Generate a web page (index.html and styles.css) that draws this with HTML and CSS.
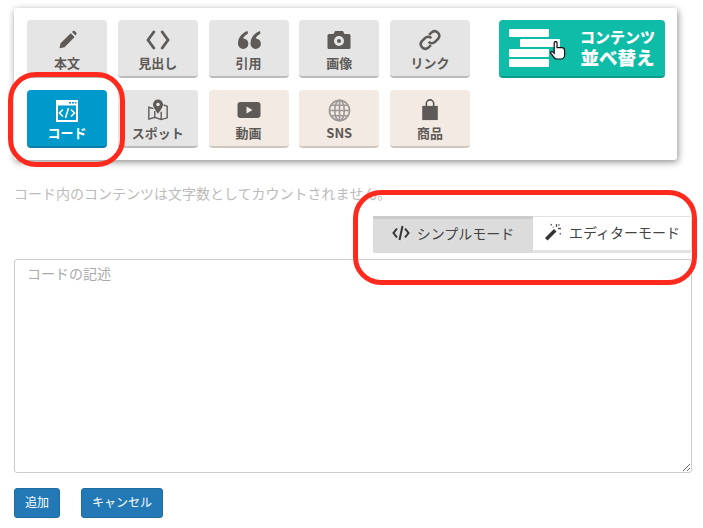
FILE: index.html
```html
<!DOCTYPE html>
<html lang="ja">
<head>
    <meta charset="UTF-8">
    <title>コードの追加</title>
    <link rel="stylesheet" href="styles.css">
</head>
<body>
    <div class="block-panel">
        <div class="block-grid">
            <div class="block-btn">
                <svg class="block-icon" viewBox="0 0 24 24"><path d="M3 22l1.3-6L16.5 3.800l4.700 4.700L9 20.700z M18 2.300l1.300-1a1.500 1.500 0 0 1 2 0l1.900 1.900a1.500 1.500 0 0 1 0 2l-1 1.300z"/></svg>
                <span>本文</span>
            </div>
            <div class="block-btn">
                <svg class="block-icon icon-wide" viewBox="0 0 24 20"><path d="M8.500 1L2 10l6.500 9M15.500 1L22 10l-6.500 9" fill="none" stroke-width="2.800"/></svg>
                <span>見出し</span>
            </div>
            <div class="block-btn">
                <svg class="block-icon icon-wide" viewBox="0 0 24 20"><path d="M10.500 1C5 3 1 7.500 1 13.500a5.200 5.200 0 1 0 5.200-5C7 6.500 8.500 5 11 3.500z M23 1c-5.500 2-9.500 6.500-9.500 12.500a5.200 5.200 0 1 0 5.200-5c.8-2 2.300-3.500 4.800-5z"/></svg>
                <span>引用</span>
            </div>
            <div class="block-btn">
                <svg class="block-icon icon-wide" viewBox="0 0 24 20"><path fill-rule="evenodd" d="M8 1h8l1.500 3H22a1.500 1.500 0 0 1 1.500 1.500v12A1.500 1.500 0 0 1 22 19H2a1.500 1.500 0 0 1-1.500-1.500v-12A1.500 1.500 0 0 1 2 4h4.500zM12 6a5 5 0 1 0 0 10 5 5 0 0 0 0-10zM12 9a2 2 0 1 1 0 4 2 2 0 0 1 0-4z"/></svg>
                <span>画像</span>
            </div>
            <div class="block-btn">
                <svg class="block-icon icon-link" viewBox="0 0 24 24"><path d="M11 6.500l3-3a5 5 0 0 1 7 7L17.500 14a5 5 0 0 1-7 0M13 17.500l-3 3a5 5 0 0 1-7-7L6.500 10a5 5 0 0 1 7 0" fill="none" stroke-width="2.800"/></svg>
                <span>リンク</span>
            </div>
            <div class="sort-btn">
                <div class="sort-bars">
                    <i></i>
                    <i class="sort-bar-moved"></i>
                    <i></i>
                    <i></i>
                    <svg class="sort-hand" viewBox="0 0 18 20"><path d="M5.500 2a1.500 1.500 0 0 1 3 0v5h5a3 3 0 0 1 3 3v5a4 4 0 0 1-4 4H8a3 3 0 0 1-2.500-1.500L2 13c-.8-1.300 1-2.500 2-1.500l1.500 1.500z" fill="#fff" stroke="#111" stroke-width="1.300"/></svg>
                </div>
                <div class="sort-label">
                    <span class="sort-line">コンテンツ</span>
                    <span class="sort-line sort-line-big">並べ替え</span>
                </div>
            </div>
            <div class="block-btn is-active">
                <svg class="block-icon code-window" viewBox="0 0 24 24">
                    <path fill="#fff" fill-rule="evenodd" d="M1 1h22v22H1zM3 6.500V21h18V6.500z"/>
                    <path fill="#0099cb" d="M14 3h2v1.500h-2zM17 3h2v1.500h-2zM20 3h1.500v1.500H20z"/>
                    <path d="M8 10.500L4.500 14 8 17.500M16 10.500l3.500 3.500-3.500 3.500M13.500 9l-3 10" fill="none" stroke-width="1.600"/>
                </svg>
                <span>コード</span>
            </div>
            <div class="block-btn">
                <svg class="block-icon icon-map" viewBox="0 0 24 24"><path d="M7 10.500L2 9v13l6.500-2 7 2.500L22 20.500V8l-4-1.500M8.500 13v7M15.500 14v8" fill="none" stroke-width="1.500"/><path fill-rule="evenodd" d="M12 .5a5.500 5.500 0 0 1 5.500 5.500c0 3.500-5.500 10-5.500 10S6.500 9.500 6.500 6A5.500 5.500 0 0 1 12 .5zM12 4a2 2 0 1 0 0 4 2 2 0 0 0 0-4z"/></svg>
                <span>スポット</span>
            </div>
            <div class="block-btn is-media">
                <svg class="block-icon icon-wide" viewBox="0 0 24 20"><path fill-rule="evenodd" d="M3.500 2h17a3 3 0 0 1 3 3v10a3 3 0 0 1-3 3h-17a3 3 0 0 1-3-3V5a3 3 0 0 1 3-3zM9.500 6.500v7l6-3.500z"/></svg>
                <span>動画</span>
            </div>
            <div class="block-btn is-media">
                <svg class="block-icon icon-globe" viewBox="0 0 24 24"><g fill="none" stroke-width="1.700"><circle cx="12" cy="12" r="10.500"/><ellipse cx="12" cy="12" rx="5" ry="10.500"/><path d="M12 1.500v21M1.500 12h21M3 6.500h18M3 17.500h18"/></g></svg>
                <span>SNS</span>
            </div>
            <div class="block-btn is-media">
                <svg class="block-icon icon-bag" viewBox="0 0 24 24"><path fill-rule="evenodd" d="M3.500 7.500h17V23h-17z"/><path d="M8 10V5a4 4 0 0 1 8 0v5" fill="none" stroke-width="1.800"/></svg>
                <span>商品</span>
            </div>
        </div>
    </div>

    <p class="note">コード内のコンテンツは文字数としてカウントされません。</p>

    <div class="mode-row">
        <div class="mode-tabs">
            <div class="mode-tab is-current">
                <svg class="mode-icon" viewBox="0 0 18 18"><path d="M5 4.500L1.500 9 5 13.500M13 4.500L16.500 9 13 13.500M10.500 2l-3 14" fill="none" stroke="#333" stroke-width="2"/></svg>
                <span>シンプルモード</span>
            </div>
            <div class="mode-tab">
                <svg class="mode-icon" viewBox="0 0 18 18"><path d="M1 15L10 6l2.500 2.500-9 9z" fill="#333"/><path d="M7 1l.5 1.500M12.500 1v3M17 5.500h-3M15.500 1.500l-1 1M16 10l.5 1.500M9 4l.5.5" fill="none" stroke="#555" stroke-width="1.300"/></svg>
                <span>エディターモード</span>
            </div>
        </div>
    </div>

    <textarea class="code-input" placeholder="コードの記述"></textarea>

    <div class="form-actions">
        <button class="action-btn" type="button">追加</button>
        <button class="action-btn" type="button">キャンセル</button>
    </div>

    <div class="ring ring-code"></div>
    <div class="ring ring-mode"></div>
</body>
</html>
```

FILE: styles.css
```css
body {
    margin: 0;
    padding: 8px 11px 0 14px;
    font-family: "Noto Sans CJK JP", "Noto Sans", sans-serif;
    background: white;
    position: relative;
    height: 520px;
    box-sizing: border-box;
    overflow: hidden;
}
.block-panel {
    width: 663px;
    height: 152px;
    box-sizing: border-box;
    padding: 12px 13px;
    background: white;
    border-radius: 3px;
    box-shadow: 1px 2px 7px rgba(0, 0, 0, 0.45);
}
.block-grid {
    display: grid;
    grid-template-columns: repeat(5, 80px) 166px;
    grid-auto-rows: 58px;
    column-gap: 10.75px;
    row-gap: 12px;
    justify-content: start;
}
.block-btn {
    display: flex;
    flex-direction: column;
    align-items: center;
    box-sizing: border-box;
    height: 58px;
    padding-top: 10px;
    background: #e5e5e5;
    border-bottom: 2px solid #bdbbb9;
    border-radius: 4px;
    color: #5d5a58;
    font-size: 13px;
    font-weight: 700;
    line-height: 18px;
}
.block-icon {
    width: 20px;
    height: 20px;
    margin-bottom: 4px;
    fill: #5d5a58;
}
.block-icon path[fill="none"] {
    stroke: #5d5a58;
}
.block-icon.icon-wide {
    width: 24px;
}
.block-icon.icon-link,
.block-icon.icon-map,
.block-icon.icon-bag {
    width: 22px;
    height: 22px;
    margin: -1px 0 3px;
}
.block-btn.is-active {
    background: #0099cb;
    border-bottom-color: #0a7ea6;
    color: white;
}
.block-icon.code-window {
    width: 24px;
    height: 24px;
    margin: -1px 0 1px;
}
.block-icon.code-window path[fill="none"] {
    stroke: white;
}
.block-btn.is-media {
    background: #f3ebe3;
    border-bottom-color: #cfc6bc;
}
.block-icon.icon-globe {
    width: 23px;
    height: 23px;
    margin: -1px 0 2px;
    stroke: #9b9896;
}
.sort-btn {
    grid-column: 6;
    grid-row: 1;
    margin-left: 18.25px;
    width: 166px;
    display: flex;
    align-items: center;
    box-sizing: border-box;
    padding: 0 10px;
    background: #0fbca8;
    border-bottom: 2px solid #0c9a8a;
    border-radius: 4px;
}
.sort-bars {
    position: relative;
    display: flex;
    flex-direction: column;
    gap: 2px;
    width: 54px;
    flex-shrink: 0;
}
.sort-bars i {
    display: block;
    width: 40px;
    height: 8px;
    background: white;
    border-radius: 1px;
}
.sort-bars i.sort-bar-moved {
    margin-left: 11px;
}
.sort-hand {
    position: absolute;
    left: 40px;
    top: 12px;
    width: 17px;
    height: 19px;
}
.sort-label {
    margin-left: 17px;
    color: white;
    font-weight: 900;
    text-align: center;
    white-space: nowrap;
}
.sort-line {
    display: block;
    font-size: 15px;
    line-height: 18px;
}
.sort-line-big {
    font-size: 18.500px;
    line-height: 22px;
}
.note {
    margin: 23px 0 0;
    color: #bbb;
    font-size: 14px;
    line-height: 20px;
}
.mode-row {
    display: flex;
    justify-content: flex-end;
    margin-top: 13px;
}
.mode-tabs {
    display: flex;
    width: 319px;
    height: 37px;
    box-sizing: border-box;
    background: white;
    border: 1px solid #e2e2e2;
    border-bottom-width: 3px;
    border-radius: 2px;
}
.mode-tab {
    display: flex;
    align-items: center;
    justify-content: center;
    gap: 7px;
    flex: 1;
    box-sizing: border-box;
    padding-bottom: 3px;
    color: #444;
    font-size: 14px;
    white-space: nowrap;
}
.mode-tab.is-current {
    flex: 0 0 160px;
    margin: -1px 0 -3px -1px;
    padding-bottom: 7px;
    background: #dcdcdc;
    border-top: 3px solid #cbcbcb;
}
.mode-icon {
    width: 18px;
    height: 18px;
}
.code-input {
    display: block;
    width: 678px;
    height: 214px;
    margin-top: 6px;
    padding: 3px 12px;
    box-sizing: border-box;
    border: 1px solid #ccc;
    border-radius: 3px;
    font-family: inherit;
    font-size: 14px;
    line-height: 20px;
}
.code-input::placeholder {
    color: #aaa;
}
.form-actions {
    display: flex;
    gap: 21px;
    margin-top: 15px;
}
.action-btn {
    height: 30px;
    padding: 0 10px 3px;
    background: #2279b5;
    border: 1px solid #1f6da3;
    border-radius: 3px;
    color: white;
    font-family: inherit;
    font-size: 12px;
}
.ring {
    position: absolute;
    box-sizing: border-box;
    border: 5px solid #ff2a1e;
    border-radius: 28px;
}
.ring-code {
    left: 8px;
    top: 72px;
    width: 117px;
    height: 95px;
}
.ring-mode {
    left: 353px;
    top: 190px;
    width: 344px;
    height: 95px;
}
```
